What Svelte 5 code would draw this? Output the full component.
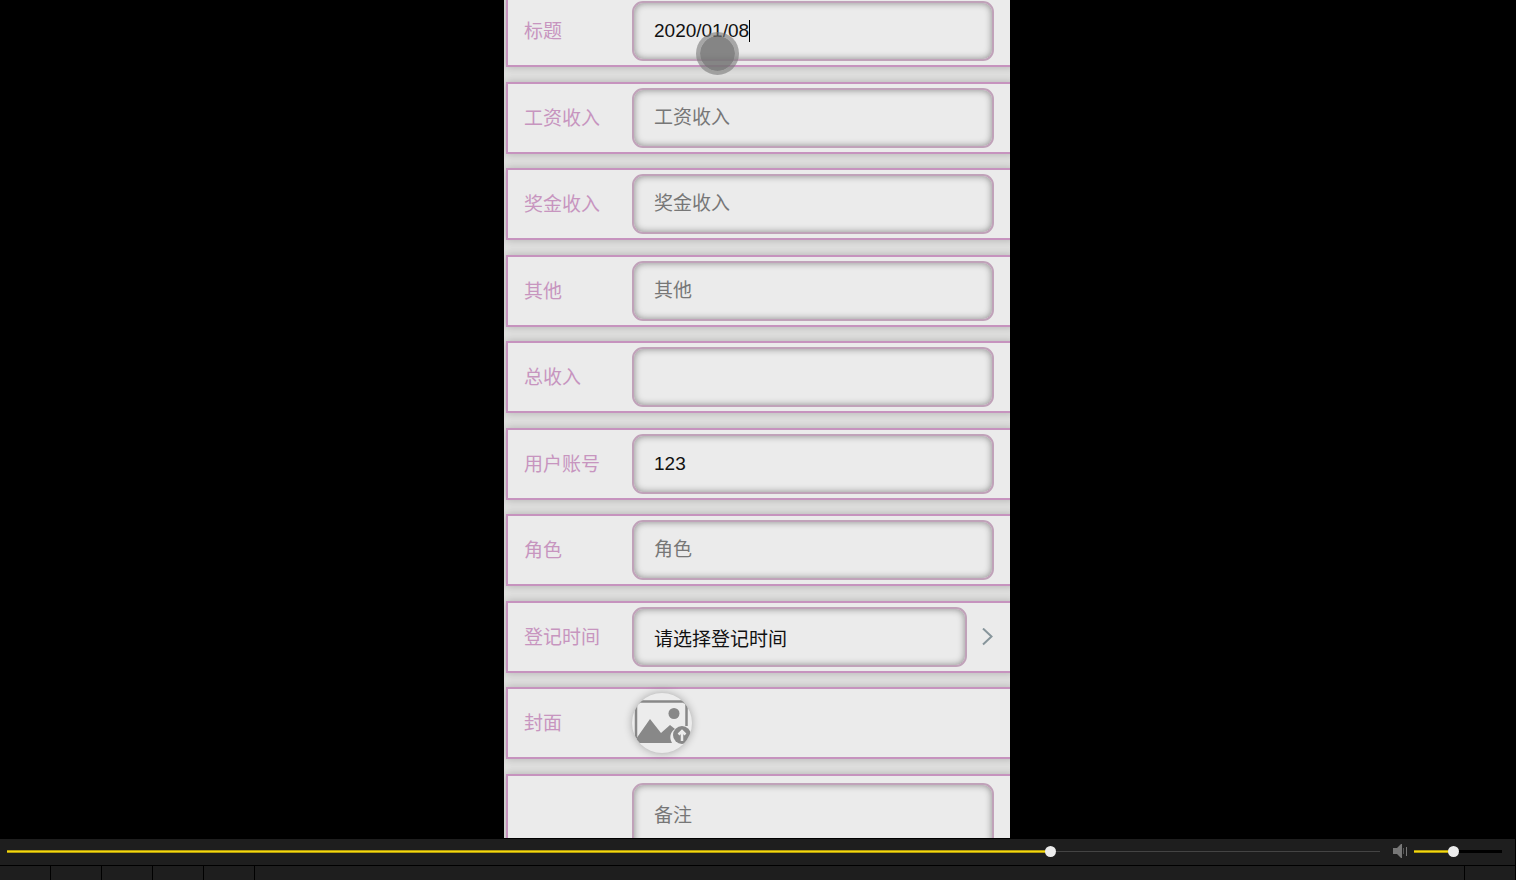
<script lang="ts">
  type Field = {
    id: string;
    label: string;
    value?: string;
    placeholder?: string;
    kind?: "text" | "date" | "cover" | "note";
  };

  const fields: Field[] = [
    { id: "title", label: "标题", value: "2020/01/08" },
    { id: "salary", label: "工资收入", placeholder: "工资收入" },
    { id: "bonus", label: "奖金收入", placeholder: "奖金收入" },
    { id: "other", label: "其他", placeholder: "其他" },
    { id: "total", label: "总收入" },
    { id: "account", label: "用户账号", value: "123" },
    { id: "role", label: "角色", placeholder: "角色" },
    { id: "date", label: "登记时间", value: "请选择登记时间", kind: "date" },
    { id: "cover", label: "封面", kind: "cover" },
    { id: "note", label: "", placeholder: "备注", kind: "note" },
  ];

  let progress = $state(76.2);
  let volume = $state(44);
</script>

<div class="player">
  <div class="stage">
    <div class="phone">
      <form class="form">
        {#each fields as field (field.id)}
          <div class="row" class:tall={field.kind === "note"}>
            <label for={field.id}>{field.label}</label>
            {#if field.kind === "cover"}
              <button class="cover" type="button" id={field.id}>
                <svg viewBox="0 0 60 60" width="60" height="60">
                  <path d="M4 45V13q0-4 4-4" fill="none" stroke="#888" stroke-width="2.5" />
                  <path d="M54.500 33V12q0-3-3-3" fill="none" stroke="#888" stroke-width="2.5" />
                  <path d="M6 8.500h47" stroke="#888" stroke-width="2.5" />
                  <circle cx="42" cy="20.500" r="5.500" fill="#888" />
                  <path d="M4 50V46L18 26l11 14 9-8 5 4c-5 3-6 9-3 14z" fill="#888" />
                  <circle cx="50" cy="42" r="9" fill="#888" />
                  <path d="M50 48V39M46.500 41.500L50 38l3.500 3.500" fill="none" stroke="#ececec" stroke-width="2.5" />
                </svg>
              </button>
            {:else if field.kind === "note"}
              <textarea id={field.id} placeholder={field.placeholder} rows="4"></textarea>
            {:else if field.kind === "date"}
              <input class="field" id={field.id} value={field.value} readonly />
              <svg class="chevron" viewBox="0 0 12 18" width="12" height="18">
                <path d="M1 0.500l8.500 8-8.500 8" fill="none" stroke="#87959b" stroke-width="2" />
              </svg>
            {:else}
              <div class="field-wrap">
                <input
                  class="field"
                  id={field.id}
                  value={field.value ?? ""}
                  placeholder={field.placeholder}
                />
                {#if field.id === "title"}
                  <span class="caret"></span>
                  <span class="touch"></span>
                {/if}
              </div>
            {/if}
          </div>
        {/each}
      </form>
    </div>
  </div>

  <div class="controls">
    <input
      class="slider seek"
      type="range"
      step="0.1"
      aria-label="播放进度"
      bind:value={progress}
      style:--fill="{progress}%"
    />
    <svg class="speaker" viewBox="0 0 16 14" width="16" height="14">
      <path d="M1 4h4l4-4h1v14H9l-4-4H1z" fill="#777" />
      <path d="M11.5 4v6" stroke="#555" />
      <path d="M14.5 3v9" stroke="#777" />
    </svg>
    <input
      class="slider volume"
      type="range"
      aria-label="音量"
      bind:value={volume}
      style:--fill="{volume}%"
    />
  </div>

  <div class="toolbar">
    {#each ["播放", "停止", "上一个", "下一个", "打开"] as name}
      <button type="button" aria-label={name}></button>
    {/each}
    <button class="last" type="button" aria-label="全屏"></button>
  </div>
</div>

<style>
  :global(body) {
    margin: 0;
    background: #000;
  }

  .player {
    display: flex;
    flex-direction: column;
    height: 100vh;
    box-sizing: border-box;
    padding-right: 1px;
    overflow: hidden;
    font-family: "Liberation Sans", "Noto Sans CJK SC", sans-serif;
    font-size: 19px;
  }

  .stage {
    flex: 1;
    min-height: 0;
    display: flex;
    justify-content: center;
    padding-right: 1px;
    margin-bottom: 1px;
  }

  .phone {
    height: 100%;
    aspect-ratio: 506 / 838;
    background: #e0e0df;
    overflow: hidden;
  }

  /* the list is scrolled a little past its first row */
  .form {
    margin: -5px -4px 0 2px;
  }

  .row {
    display: flex;
    align-items: center;
    height: 72px;
    box-sizing: border-box;
    margin-bottom: 14px;
    padding: 0 18px 0 16px;
    border: 2px solid #c693be;
    background: #ebebeb;
    box-shadow: 0 0 8px rgba(0, 0, 0, 0.22);
  }

  .row:nth-child(odd) {
    margin-bottom: 15px;
  }

  .row.tall {
    height: 140px;
    align-items: flex-start;
    padding-top: 7px;
  }

  label {
    flex: 0 0 108px;
    padding-top: 2px;
    line-height: 28px;
    color: #c795bf;
  }

  .field-wrap {
    flex: 1;
    position: relative;
    display: flex;
  }

  .field,
  textarea {
    flex: 1;
    min-width: 0;
    height: 60px;
    box-sizing: border-box;
    padding: 0 20px;
    border: 2px solid #c0a2b9;
    border-radius: 11px;
    outline: none;
    background: #ebebeb;
    box-shadow: inset 0 0 7px rgba(0, 0, 0, 0.42);
    font: inherit;
    color: #111;
  }

  textarea {
    height: 120px;
    padding-top: 17px;
    line-height: 28px;
    resize: none;
  }

  .field::placeholder,
  textarea::placeholder {
    color: #777;
    opacity: 1;
  }

  .caret {
    position: absolute;
    left: 117px;
    top: 19px;
    width: 1px;
    height: 22px;
    background: #000;
  }

  .touch {
    position: absolute;
    left: 64px;
    top: 31px;
    width: 35px;
    height: 35px;
    border: 4px solid rgba(120, 120, 120, 0.6);
    border-radius: 50%;
    background: rgba(115, 115, 115, 0.85);
    background-clip: padding-box;
    pointer-events: none;
  }

  .chevron {
    flex: none;
    margin-left: 15px;
  }

  .cover {
    width: 60px;
    height: 60px;
    padding: 0;
    border: 0;
    border-radius: 50%;
    overflow: hidden;
    background: #ececec;
    box-shadow: 0 0 8px rgba(0, 0, 0, 0.3);
  }

  .cover svg {
    display: block;
  }

  .controls {
    display: flex;
    align-items: center;
    height: 26px;
    box-sizing: border-box;
    padding: 0 13px 2px 7px;
    background: #1e1e1e;
  }

  .slider {
    appearance: none;
    height: 12px;
    margin: 0;
    background: transparent;
  }

  .slider::-webkit-slider-runnable-track {
    height: 3px;
    background:
      linear-gradient(#8f7d0a, #f5d90f 50%, #8f7d0a) 0 0 / var(--fill) 100% no-repeat,
      var(--rest);
  }

  .slider::-webkit-slider-thumb {
    appearance: none;
    width: 11px;
    height: 11px;
    margin-top: -4px;
    border-radius: 50%;
    background: #ececec;
  }

  .seek {
    --rest: linear-gradient(#1e1e1e 33%, #444 33%, #444 67%, #1e1e1e 67%);
    flex: 1;
    min-width: 0;
  }

  .speaker {
    flex: none;
    margin: 0 6px 0 12px;
  }

  .volume {
    --rest: #000;
    width: 88px;
  }

  .toolbar {
    display: flex;
    height: 14px;
    margin-top: 1px;
    background: #1e1e1e;
  }

  .toolbar button {
    width: 51px;
    padding: 0;
    border: 0;
    border-right: 1px solid #000;
    background: transparent;
  }

  .toolbar .last {
    margin-left: auto;
    border-right: 0;
    border-left: 1px solid #000;
  }
</style>
